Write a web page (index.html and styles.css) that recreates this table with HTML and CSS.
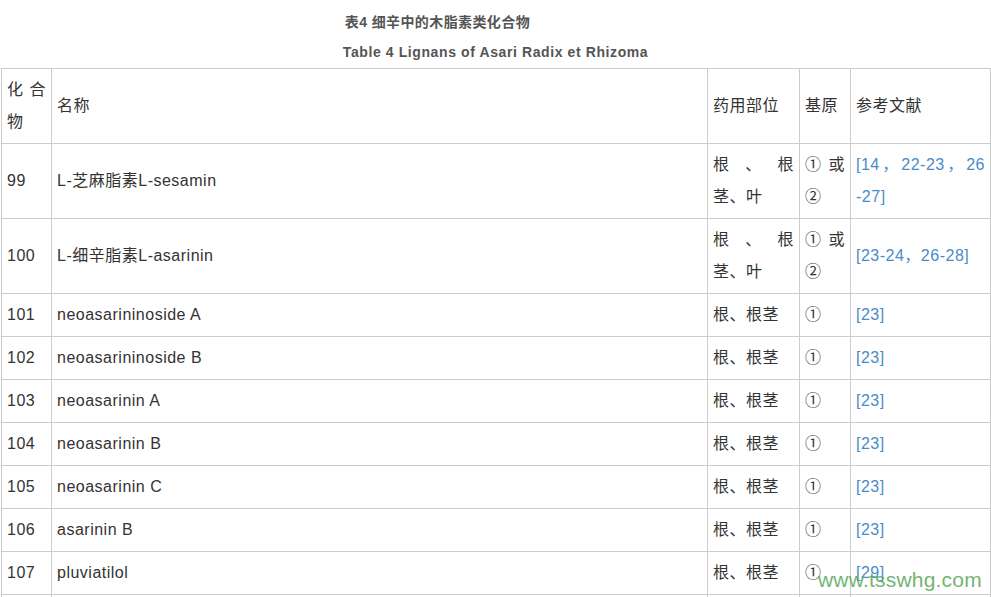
FILE: index.html
```html
<!DOCTYPE html>
<html lang="zh">
<head>
<meta charset="utf-8">
<title>Table 4</title>
<link rel="stylesheet" href="styles.css">
</head>
<body>
<div class="page">
  <div class="caption">
    <div class="caption-inner">
      <p class="cap-zh">表4 细辛中的木脂素类化合物</p>
      <p class="cap-en">Table 4 Lignans of Asari Radix et Rhizoma</p>
    </div>
  </div>
  <table class="data">
    <colgroup>
      <col class="c1"><col class="c2"><col class="c3"><col class="c4"><col class="c5">
    </colgroup>
    <tr><td class="j">化 合 物</td><td>名称</td><td>药用部位</td><td>基原</td><td>参考文献</td></tr>
    <tr><td>99</td><td>L-芝麻脂素L-sesamin</td><td class="j">根 、 根茎、叶</td><td class="j">① 或②</td><td class="j"><a>[14，22-23，26<wbr><span class="nw">-27]</span></a></td></tr>
    <tr><td>100</td><td>L-细辛脂素L-asarinin</td><td class="j">根 、 根茎、叶</td><td class="j">① 或②</td><td><a>[23-24，26-28]</a></td></tr>
    <tr><td>101</td><td>neoasarininoside A</td><td>根、根茎</td><td>①</td><td><a>[23]</a></td></tr>
    <tr><td>102</td><td>neoasarininoside B</td><td>根、根茎</td><td>①</td><td><a>[23]</a></td></tr>
    <tr><td>103</td><td>neoasarinin A</td><td>根、根茎</td><td>①</td><td><a>[23]</a></td></tr>
    <tr><td>104</td><td>neoasarinin B</td><td>根、根茎</td><td>①</td><td><a>[23]</a></td></tr>
    <tr><td>105</td><td>neoasarinin C</td><td>根、根茎</td><td>①</td><td><a>[23]</a></td></tr>
    <tr><td>106</td><td>asarinin B</td><td>根、根茎</td><td>①</td><td><a>[23]</a></td></tr>
    <tr><td>107</td><td>pluviatilol</td><td>根、根茎</td><td>①</td><td><a>[29]</a></td></tr>
    <tr class="empty"><td></td><td></td><td></td><td></td><td></td></tr>
  </table>
  <div class="watermark">www.tsswhg.com</div>
</div>
</body>
</html>
```
FILE: styles.css
```css
html, body {
  margin: 0;
  padding: 0;
  background: #fff;
}
body {
  font-family: "Liberation Sans", Arial, "Noto Sans CJK SC", sans-serif;
  color: #333;
  overflow: hidden;
}
.page {
  padding-left: 1px;
  width: 989px;
}
.caption {
  display: flex;
  justify-content: center;
  padding-top: 13px;
}
.caption-inner {
  display: flex;
  flex-direction: column;
}
.cap-zh {
  margin: 0 0 0 2px;
  font-size: 14px;
  font-weight: bold;
  color: #555;
  line-height: 18px;
  letter-spacing: 0.4px;
}
.cap-en {
  margin: 12px 0 0 0;
  font-size: 14px;
  font-weight: bold;
  color: #555;
  line-height: 18px;
  letter-spacing: 0.6px;
}
.data {
  margin-top: 7px;
  border-collapse: collapse;
  table-layout: fixed;
  width: 989px;
  font-size: 16px;
  line-height: 32px;
  letter-spacing: 0.5px;
}
.c1 { width: 50px; }
.c2 { width: 656px; }
.c3 { width: 92px; }
.c4 { width: 51px; }
.c5 { width: 140px; }
.data td {
  border: 1px solid #ccc;
  padding: 5px;
  vertical-align: middle;
  text-align: left;
  word-break: break-all;
}
.data td.j {
  text-align: justify;
}
.data tr.empty td {
  height: 32px;
}
.data a {
  color: #4a8bc9;
  text-decoration: none;
}
.nw {
  white-space: nowrap;
}
.watermark {
  position: absolute;
  left: 818px;
  top: 568px;
  font-size: 21px;
  color: #5aa85a;
  opacity: 0.85;
  letter-spacing: 0.2px;
  font-family: "Liberation Sans", Arial, sans-serif;
}
```
